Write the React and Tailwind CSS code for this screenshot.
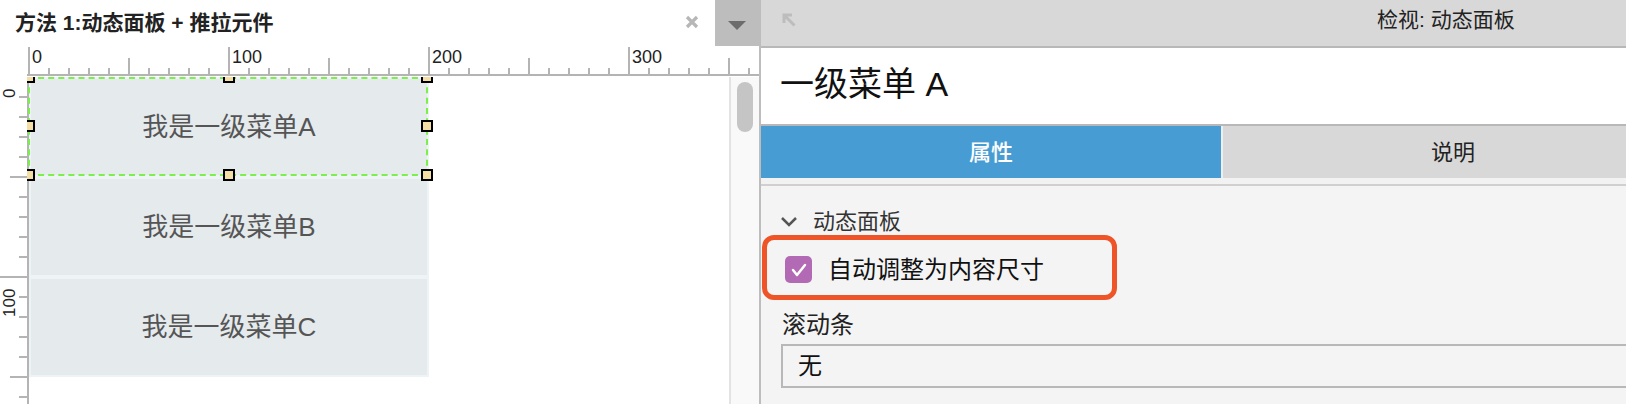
import React from "react";

const RULER = "#b4b4b4";

const HANDLES = [
    "left-[-4px] top-[-6px]",
    "left-[196px] top-[-6px]",
    "left-[394px] top-[-6px]",
    "left-[-4px] top-[43px]",
    "left-[394px] top-[43px]",
    "left-[-4px] top-[92px]",
    "left-[196px] top-[92px]",
    "left-[394px] top-[92px]",
];

const TopRuler = () => {
    const ticks = [];
    for (let k = 0; k <= 36; k++) {
        const x = 29 + k * 20;
        const y1 = k % 10 === 0 ? 1 : k % 5 === 0 ? 12 : 22;
        ticks.push(<rect key={k} x={x - 1} y={y1} width="2" height={28 - y1} fill={RULER} />);
    }
    return (
        <svg width="759" height="31" className="block shrink-0">
            {ticks}
            <rect x="27" y="28" width="732" height="2" fill={RULER} />
            {[0, 100, 200, 300].map((n, i) => (
                <text key={n} x={32 + i * 200} y="17" fontSize="18" fill="#222">
                    {n}
                </text>
            ))}
        </svg>
    );
};

const SideRuler = () => {
    const ticks = [];
    for (let k = 1; k <= 16; k++) {
        const y = k * 20;
        const x1 = k % 10 === 0 ? 0 : k % 5 === 0 ? 10 : 19;
        ticks.push(<rect key={k} x={x1} y={y - 1} width={27 - x1} height="2" fill={RULER} />);
    }
    return (
        <svg width="27" height="327" className="block shrink-0">
            {ticks}
            <text x="0" y="0" fontSize="17" fill="#222" transform="translate(15,21) rotate(-90)">
                0
            </text>
            <text x="0" y="0" fontSize="17" fill="#222" transform="translate(15,240) rotate(-90)">
                100
            </text>
        </svg>
    );
};

const App = () => {
    return (
        <div className="flex h-[404px] w-[1626px] overflow-hidden bg-white font-['Liberation_Sans','Noto_Sans_CJK_SC',sans-serif]">
            {/* Left: canvas panel */}
            <div className="flex w-[759px] shrink-0 flex-col">
                <div className="flex h-[46px] shrink-0 items-center">
                    <span className="pl-[15px] text-[21px] font-bold text-[#222]">方法 1:动态面板 + 推拉元件</span>
                    <svg width="14" height="14" className="ml-auto mb-[3px]">
                        <path d="M2 2 L12 12 M12 2 L2 12" stroke="#b7b7b7" strokeWidth="3.2" />
                    </svg>
                    <div className="ml-[16px] flex h-full w-[44px] items-center justify-center bg-[#bdbdbd] pt-[4px]">
                        <svg width="18" height="9">
                            <polygon points="0,0 18,0 9,9" fill="#6c6c6c" />
                        </svg>
                    </div>
                </div>

                <TopRuler />

                <div className="flex flex-1">
                    <SideRuler />
                    <div className="relative flex-1 overflow-hidden">
                        <div className="h-full border-l-2 border-[#b4b4b4]">
                            <div className="flex w-[400px] flex-col">
                                {["A", "B", "C"].map((l) => (
                                    <div
                                        key={l}
                                        className="flex h-[100px] items-center justify-center border-2 border-[#eef3f5] bg-[#e5eaed] text-[26px] text-[#555]"
                                    >
                                        我是一级菜单{l}
                                    </div>
                                ))}
                            </div>
                        </div>
                        <div className="absolute left-[1px] top-0 h-[99px] w-[400px] border-2 border-dashed border-[#7bef4a]" />
                        {HANDLES.map((pos) => (
                            <div key={pos} className={`absolute h-[12px] w-[12px] border-2 border-black bg-[#f3dfa6] ${pos}`} />
                        ))}
                    </div>
                    <div className="w-[30px] shrink-0 border-l-2 border-[#e3e3e3] bg-[#f9f9f9] pl-[6px] pt-[5px]">
                        <div className="h-[50px] w-[16px] rounded-full bg-[#c5c5c5]" />
                    </div>
                </div>
            </div>

            {/* Right: inspector */}
            <div className="flex-1 overflow-hidden border-l-2 border-[#bdbdbd]">
                <div className="flex h-full w-[925px] flex-col">
                    <div className="flex h-[48px] shrink-0 items-center border-b-2 border-[#b8b8b8] bg-[#d8d8d8] pb-[6px]">
                        <svg width="14" height="14" className="ml-[21px]">
                            <path d="M12.5 12.5 L2.5 2.5 M2 10 L2 2 L10 2" stroke="#bdbdbd" strokeWidth="3" fill="none" />
                        </svg>
                        <span className="ml-[581px] text-[21px] text-[#222]">检视: 动态面板</span>
                    </div>

                    <div className="flex h-[78px] shrink-0 items-center border-b-2 border-[#b8b8b8] bg-white pb-[4px] pl-[19px]">
                        <span className="text-[34px] text-[#111]">一级菜单 A</span>
                    </div>

                    <div className="flex h-[52px] shrink-0">
                        <div className="flex w-[460px] items-center justify-center bg-[#479dd3] text-[22px] font-medium text-white">
                            属性
                        </div>
                        <div className="w-[2px] bg-[#eeeeee]" />
                        <div className="flex w-[460px] items-center justify-center bg-[#d8d8d8] text-[22px] text-[#222]">
                            说明
                        </div>
                    </div>
                    <div className="h-[8px] shrink-0 border-b-2 border-[#d0d0d0] bg-[#f2f2f2]" />

                    <div className="flex flex-1 flex-col bg-[#f4f4f4]">
                        <div className="ml-[19px] mt-[21px] flex h-[28px] items-center">
                            <svg width="18" height="11">
                                <polyline points="2,2 9,9 16,2" stroke="#555" strokeWidth="2.5" fill="none" />
                            </svg>
                            <span className="ml-[15px] text-[22px] text-[#333]">动态面板</span>
                        </div>

                        <div className="ml-[1px] flex h-[65px] w-[355px] items-center rounded-[12px] border-[5px] border-[#ee5427] pt-[4px]">
                            <div className="ml-[18px] flex h-[27px] w-[27px] items-center justify-center rounded-[5px] bg-[#b36ab5]">
                                <svg width="16" height="14">
                                    <polyline points="2,7 6,12 14,2" stroke="#fff" strokeWidth="2.5" fill="none" strokeLinecap="round" strokeLinejoin="round" />
                                </svg>
                            </div>
                            <span className="ml-[16px] text-[24px] text-[#111]">自动调整为内容尺寸</span>
                        </div>

                        <div className="ml-[21px] mt-[11px] text-[24px] leading-[28px] text-[#222]">滚动条</div>
                        <div className="ml-[20px] mr-[10px] mt-[5px] flex h-[44px] items-center border-2 border-[#b8b8b8] pl-[15px] text-[24px] text-[#111]">
                            无
                        </div>
                    </div>
                </div>
            </div>
        </div>
    );
};

export default App;
